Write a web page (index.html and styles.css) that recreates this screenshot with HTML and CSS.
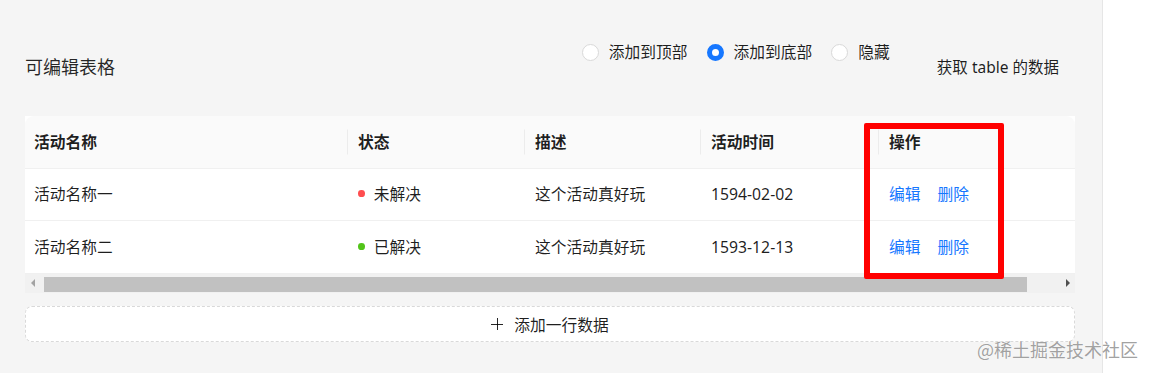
FILE: index.html
```html
<!DOCTYPE html>
<html lang="zh-CN">
<head>
	<meta charset="UTF-8">
	<meta name="viewport" content="width=device-width">
	<title>可编辑表格</title>

	<link rel="stylesheet" href="styles.css">
</head>

<body>
<main class="page">

<div class="toolbar">
	<div class="toolbar-title">可编辑表格</div>
	<div class="toolbar-actions">
		<div class="radio-group">
			<label class="radio"><span class="radio-circle"></span><span class="radio-label">添加到顶部</span></label>
			<label class="radio"><span class="radio-circle checked"></span><span class="radio-label">添加到底部</span></label>
			<label class="radio"><span class="radio-circle"></span><span class="radio-label">隐藏</span></label>
		</div>
		<button class="text-btn" type="button">获取 table 的数据</button>
	</div>
</div>

<div class="table-wrap">
	<table class="edit-table">
		<colgroup>
			<col class="col-name">
			<col class="col-state">
			<col class="col-desc">
			<col class="col-time">
			<col class="col-ops">
		</colgroup>
		<thead>
			<tr>
				<th>活动名称</th>
				<th>状态</th>
				<th>描述</th>
				<th>活动时间</th>
				<th>操作</th>
			</tr>
		</thead>
		<tbody>
			<tr>
				<td>活动名称一</td>
				<td><span class="dot dot-open"></span>未解决</td>
				<td>这个活动真好玩</td>
				<td>1594-02-02</td>
				<td><a href="#" class="op">编辑</a><a href="#" class="op">删除</a></td>
			</tr>
			<tr>
				<td>活动名称二</td>
				<td><span class="dot dot-closed"></span>已解决</td>
				<td>这个活动真好玩</td>
				<td>1593-12-13</td>
				<td><a href="#" class="op">编辑</a><a href="#" class="op">删除</a></td>
			</tr>
		</tbody>
	</table>

	<!-- fake horizontal scrollbar, the native one looks different in headless -->
	<div class="hscroll">
		<span class="hscroll-arrow left"></span>
		<div class="hscroll-track"><div class="hscroll-thumb"></div></div>
		<span class="hscroll-arrow right"></span>
	</div>

	<!-- annotation box drawn on the screenshot -->
	<div class="mark-box"></div>
</div>

<button class="add-row" type="button"><span class="plus"></span>添加一行数据</button>

</main>

<div class="watermark">@稀土掘金技术社区</div>

</body>
</html>
```

FILE: styles.css
```css
body {
	margin: 0;
	background: #fff;
	font-family: "Noto Sans", "Noto Sans CJK SC", sans-serif;
	color: rgba(0, 0, 0, 0.88);
}

.page {
	box-sizing: border-box;
	width: 1103px;
	min-height: 373px;
	padding: 48px 27px 0 25px;
	background: #f5f5f5;
	border-right: 1px solid #e6e6e6;
}

/* toolbar */
.toolbar {
	display: flex;
	justify-content: space-between;
	align-items: center;
	height: 36px;
	margin-bottom: 32px;
}

.toolbar-title {
	font-size: 18px;
	line-height: 25px;
	font-family: "Noto Sans CJK SC", sans-serif;
	color: rgba(0, 0, 0, 0.85);
}

.toolbar-actions {
	display: flex;
	align-items: center;
	gap: 20px;
	height: 100%;
}

.radio-group {
	display: flex;
	align-self: flex-start;
	margin-top: -8px;
}

.radio {
	display: flex;
	align-items: center;
	margin-right: 9px;
	font-size: 15.75px;
	line-height: 24.75px;
	font-family: "Noto Sans CJK SC", sans-serif;
}

.radio:last-child { margin-right: 0; }

.radio-circle {
	box-sizing: border-box;
	width: 17px;
	height: 17px;
	border: 1px solid #d9d9d9;
	border-radius: 50%;
	background: #fff;
}

.radio-circle.checked {
	border: 5px solid #1677ff;
	background: #fff;
}

.radio-label {
	padding: 0 10px;
}

.text-btn {
	height: 36px;
	padding: 0 17px;
	margin-right: -1px;
	border: none;
	background: transparent;
	font-family: "Noto Sans", "Noto Sans CJK SC", sans-serif;
	font-size: 15.5px;
	color: rgba(0, 0, 0, 0.88);
}

/* table */
.table-wrap {
	position: relative;
	width: 1050px;
}

.edit-table {
	width: 1050px;
	table-layout: fixed;
	border-collapse: separate;
	border-spacing: 0;
	background: #fff;
	font-size: 15.75px;
	line-height: 24.5px;
}

.col-name { width: 324px; }
.col-state { width: 177px; }
.col-desc { width: 176px; }
.col-time { width: 178px; }
.col-ops { width: 195px; }

.edit-table th,
.edit-table td {
	padding: 13.5px 9px;
	text-align: left;
	border-bottom: 1px solid #f0f0f0;
	white-space: nowrap;
}

.edit-table th {
	position: relative;
	background: #fafafa;
	font-weight: 600;
	font-family: "Noto Sans CJK SC", sans-serif;
}

.edit-table th:first-child { border-top-left-radius: 9px; }
.edit-table th:last-child { border-top-right-radius: 9px; }

.edit-table th:not(:last-child)::before {
	content: "";
	position: absolute;
	right: 1px;
	top: 50%;
	height: 25px;
	width: 1px;
	transform: translateY(-50%);
	background: #ececec;
}

.edit-table td {
	font-family: "Noto Sans", "Noto Sans CJK SC", sans-serif;
}

.dot {
	display: inline-block;
	width: 6.75px;
	height: 6.75px;
	border-radius: 50%;
	margin-right: 9px;
	vertical-align: middle;
	position: relative;
	top: -2px;
}

.dot-open { background: #ff4d4f; }
.dot-closed { background: #52c41a; }

.op {
	color: #1677ff;
	text-decoration: none;
	margin-right: 17px;
	font-family: "Noto Sans CJK SC", sans-serif;
}

/* scrollbar */
.hscroll {
	display: flex;
	align-items: stretch;
	height: 19px;
	background: #f1f1f1;
}

.hscroll-arrow {
	width: 19px;
	position: relative;
}

.hscroll-arrow::after {
	content: "";
	position: absolute;
	top: 50%;
	left: 50%;
	transform: translate(-50%, -50%);
	border-top: 4px solid transparent;
	border-bottom: 4px solid transparent;
}

.hscroll-arrow.left::after {
	border-right: 4px solid #a3a3a3;
	margin-left: -2px;
}

.hscroll-arrow.right::after {
	border-left: 4px solid #505050;
	margin-left: 2px;
}

.hscroll-track {
	flex: 1;
	padding: 3px 0 1px;
}

.hscroll-thumb {
	width: 983px;
	height: 100%;
	background: #c1c1c1;
}

.mark-box {
	position: absolute;
	left: 839px;
	top: 7px;
	width: 140px;
	height: 156px;
	box-sizing: border-box;
	border: 6.5px solid #ff0000;
	border-radius: 2px;
}

/* add row */
.add-row {
	display: flex;
	align-items: center;
	justify-content: center;
	width: 1050px;
	height: 36px;
	margin-top: 13.5px;
	border: 1px dashed #d9d9d9;
	border-radius: 7px;
	background: #fff;
	font-family: "Noto Sans CJK SC", sans-serif;
	font-size: 15.75px;
	color: rgba(0, 0, 0, 0.88);
}

.plus {
	position: relative;
	width: 12px;
	height: 12px;
	margin-right: 11px;
}

.plus::before,
.plus::after {
	content: "";
	position: absolute;
	background: rgba(0, 0, 0, 0.85);
}

.plus::before { left: 0; right: 0; top: 5.5px; height: 1.5px; }
.plus::after { top: 0; bottom: 0; left: 5.25px; width: 1.5px; }

.watermark {
	position: absolute;
	right: 13px;
	top: 337px;
	font-family: "Noto Sans CJK SC", sans-serif;
	font-size: 18px;
	line-height: 24px;
	color: rgba(120, 120, 120, 0.7);
	text-shadow: 0 0 1px #fff;
}
```
